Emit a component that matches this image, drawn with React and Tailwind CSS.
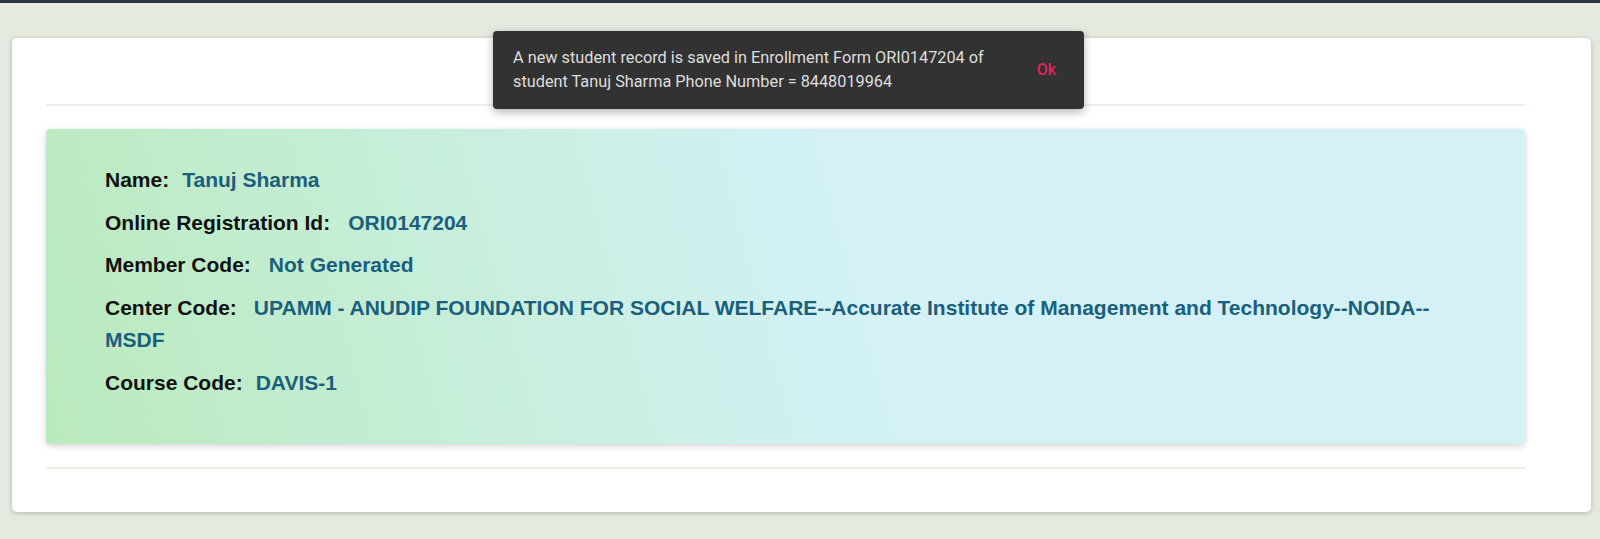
export default function App() {
  const rows = [
    { label: 'Name:', value: 'Tanuj Sharma', gap: 'ml-[13px]' },
    { label: 'Online Registration Id:', value: 'ORI0147204', gap: 'ml-[18px]' },
    { label: 'Member Code:', value: 'Not Generated', gap: 'ml-[18px]' },
    {
      label: 'Center Code:',
      value: 'UPAMM - ANUDIP FOUNDATION FOR SOCIAL WELFARE--Accurate Institute of Management and Technology--NOIDA--MSDF',
      gap: 'ml-[17px]',
    },
    { label: 'Course Code:', value: 'DAVIS-1', gap: 'ml-[13px]' },
  ]

  return (
    <div className="relative min-h-[539px] bg-[#e4eadf] font-['Liberation_Sans',Arial,sans-serif]">
      <div className="h-[3px] bg-[#2e3747]" />

      <div className="pt-[35px] pl-[12px] pr-[9px]">
        <div className="h-[474px] rounded-[5px] bg-white shadow-[0_1px_5px_rgba(0,0,0,0.22)] pt-[66px]">
          <div className="ml-[34px] mr-[66px] border-t-2 border-[#eceee6]" />

          <div className="ml-[34px] mr-[66px] mt-[23px] h-[315px] rounded-[4px] bg-linear-75 from-[#b9eabc] via-[#c8eedc] via-30% to-[#d3f1f7] to-55% shadow-[0_2px_6px_rgba(0,0,0,0.18)] pt-[35px] pl-[59px] pr-[59px]">
            {rows.map((r) => (
              <p key={r.label} className="mb-[10.7px] text-[21px] font-bold leading-[32px] text-[#111]">
                {r.label}
                <span className={`${r.gap} text-[#1a5f7c]`}>{r.value}</span>
              </p>
            ))}
          </div>

          <div className="ml-[34px] mr-[66px] mt-[23px] border-t-2 border-[#eceee6]" />
        </div>
      </div>

      <div className="absolute left-[493px] top-[31px] flex h-[78px] w-[591px] items-center justify-between rounded-[4px] bg-[#323232] pl-[20px] pr-[28px] shadow-[0_3px_8px_rgba(0,0,0,0.3)] font-['Roboto',sans-serif]">
        <p className="w-[490px] text-[16.3px] leading-[24px] text-[#dedede]">
          A new student record is saved in Enrollment Form ORI0147204 of student Tanuj Sharma Phone Number = 8448019964
        </p>
        <span className="text-[16px] font-medium text-[#e0245e]">Ok</span>
      </div>
    </div>
  )
}
